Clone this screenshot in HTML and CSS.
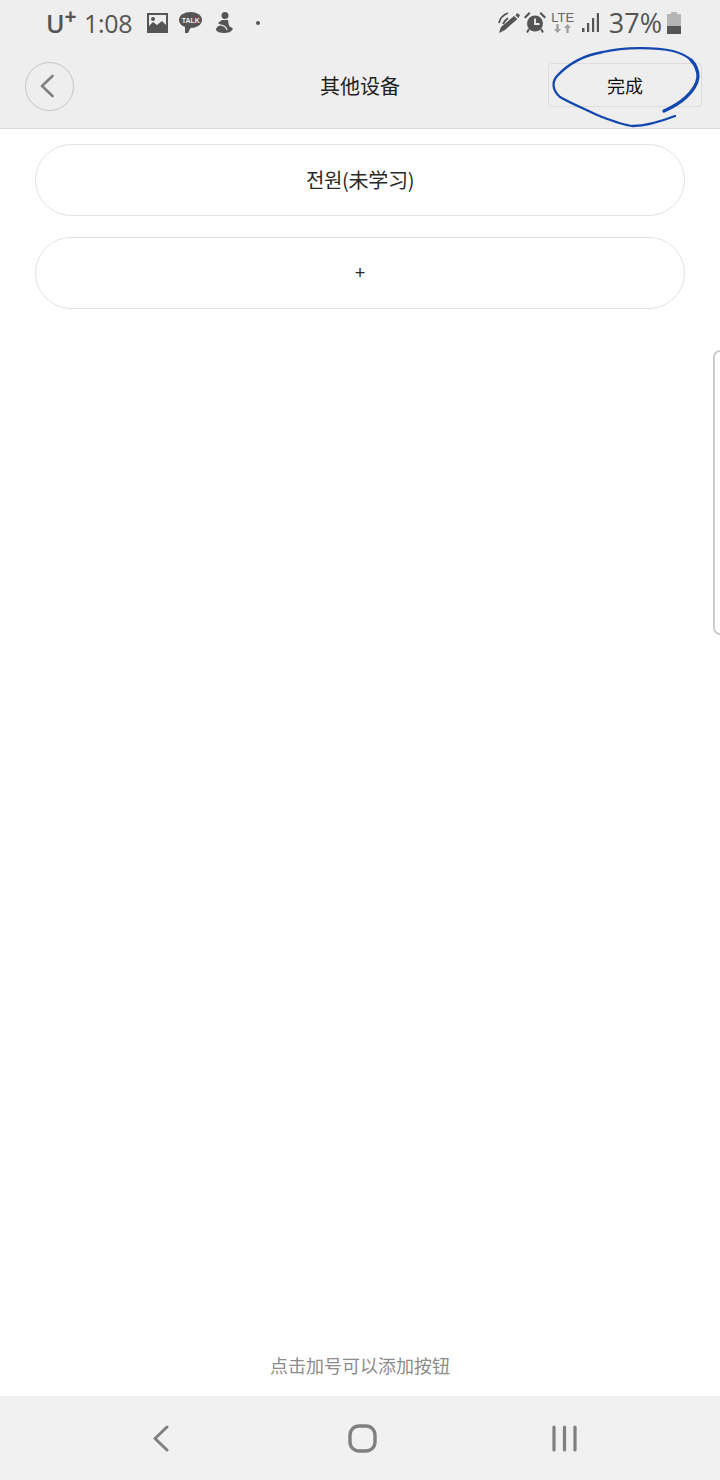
FILE: index.html
```html
<!DOCTYPE html>
<html lang="zh">
<head>
    <meta charset="UTF-8">
    <meta name="viewport" content="width=device-width, initial-scale=1.0">
    <title>其他设备</title>
    <link rel="stylesheet" href="styles.css">
</head>
<body>
    <div class="top">
        <div class="status">
            <div class="status-left">
                <span class="carrier">U<sup>+</sup></span>
                <span class="time">1:08</span>
                <svg class="ic-photo" width="21" height="20" viewBox="0 0 21 20">
                    <path fill="#555" fill-rule="evenodd" d="M0 0h21v20H0zM2 2v11l4-4 4 3 5-4 4 4V2z"/>
                    <circle cx="6" cy="6" r="2" fill="#555"/>
                </svg>
                <span class="talk"><span class="talk-label">TALK</span></span>
                <svg class="ic-person" width="19" height="21" viewBox="0 0 19 21">
                    <circle cx="10" cy="3.500" r="3.500" fill="#555"/>
                    <path fill="#555" d="M7 8h6l1 6c2 1 3 2 4 3-2 3-5 4-9 4-4 0-7-1-8-3 0-3 3-4 5-6-1 0-2 0-3-1 1-1 3-2 4-3z"/>
                    <path fill="none" stroke="#eee" stroke-width="1.200" d="M4 13c3 0 7 1 8 5"/>
                </svg>
                <span class="dot"></span>
            </div>
            <div class="status-right">
                <svg class="ic-pen" width="22" height="21" viewBox="0 0 22 21">
                    <path fill="#555" d="M16 4l3.500 3L7 18l-6 3 2-6z"/>
                    <path fill="none" stroke="#555" stroke-width="1.800" d="M1 11C2 6 5 3 10 1M5 12c1-2 2-4 5-6"/>
                    <path fill="#555" d="M19 1l3 2-1.500 3-3-2.500z"/>
                </svg>
                <svg class="ic-alarm" width="22" height="21" viewBox="0 0 22 21">
                    <circle cx="11" cy="11.500" r="8" fill="#555"/>
                    <path fill="none" stroke="#eee" stroke-width="1.800" d="M11 6.500v5.500h4.500"/>
                    <path fill="#555" d="M0 5l5-5 1.500 1.500-5 5zM22 5l-5-5-1.500 1.500 5 5z"/>
                    <path stroke="#555" stroke-width="2" d="M5 17l-2 3.500M17 17l2 3.500"/>
                </svg>
                <span class="lte">LTE<svg width="17" height="9" viewBox="0 0 17 9"><path fill="#a0a0a0" d="M3.500 9L0 5h2.300V0h2.400v5H7zM13.500 0L17 4h-2.300v5h-2.400V4H10z"/></svg></span>
                <svg class="ic-signal" width="17" height="19" viewBox="0 0 17 19">
                    <rect x="0" y="15" width="2.500" height="4" fill="#555"/>
                    <rect x="5" y="10" width="2.200" height="9" fill="#555"/>
                    <rect x="10" y="5" width="2.200" height="14" fill="#555"/>
                    <rect x="14.800" y="0" width="2.200" height="19" fill="#555"/>
                </svg>
                <span class="battery-text">37%</span>
                <svg class="ic-battery" width="14" height="22" viewBox="0 0 14 22">
                    <path fill="#b5b5b5" d="M4 0h6v2h4v20H0V2h4z"/>
                    <rect y="14" width="14" height="8" fill="#555"/>
                </svg>
            </div>
        </div>
        <header class="nav">
            <button class="back-btn">
                <svg width="14" height="24" viewBox="0 0 14 24"><path fill="none" stroke="#808080" stroke-width="2.600" stroke-linecap="round" stroke-linejoin="round" d="M12.500 2L2 12l10.500 10"/></svg>
            </button>
            <h1 class="title">其他设备</h1>
            <button class="done-btn">完成</button>
        </header>
    </div>

    <main class="content">
        <button class="pill pill-name">전원(未学习)</button>
        <button class="pill pill-add">+</button>
        <p class="hint">点击加号可以添加按钮</p>
    </main>

    <nav class="softkeys">
        <svg class="key-back" width="16" height="27" viewBox="0 0 16 27"><path fill="none" stroke="#808080" stroke-width="3" stroke-linecap="round" stroke-linejoin="round" d="M14 2L2 13.500 14 25"/></svg>
        <svg class="key-home" width="29" height="29" viewBox="0 0 29 29"><rect x="2" y="2" width="25" height="25" rx="9" fill="none" stroke="#808080" stroke-width="3.400"/></svg>
        <svg class="key-recent" width="25" height="27" viewBox="0 0 25 27"><path stroke="#808080" stroke-width="3.200" stroke-linecap="round" d="M2 2v23M12.500 2v23M23 2v23"/></svg>
    </nav>

    <!-- pen mark on top of the screenshot -->
    <svg class="scribble" width="720" height="135" viewBox="0 0 720 135">
        <path fill="none" stroke="#1247ad" stroke-width="2.300" stroke-linecap="round" d="M691 60C686 55 680 53 673 51C655 47 625 47 603 52C585 55 570 62 557 76C552 82 552 90 560 97C572 104 585 109 597 115C610 120 622 125 633 126C648 126 662 121 675 116"/>
        <path fill="none" stroke="#1247ad" stroke-width="3.200" stroke-linecap="round" d="M664 111C680 104 696 92 698 77C698 70 696 65 691 60"/>
    </svg>

    <div class="side-handle"></div>
</body>
</html>
```

FILE: styles.css
```css
html, body {
    margin: 0;
    padding: 0;
}
body {
    position: relative;
    width: 720px;
    height: 1480px;
    overflow: hidden;
    display: flex;
    flex-direction: column;
    background: #fff;
    font-family: "Noto Sans CJK SC", "Noto Sans", sans-serif;
}
button {
    font-family: inherit;
    background: none;
    padding: 0;
    cursor: pointer;
}

/* top area */
.top {
    height: 129px;
    flex: none;
    box-sizing: border-box;
    background: #eeeeee;
    border-bottom: 1px solid #dcdcdc;
}
.status {
    height: 45px;
    display: flex;
    justify-content: space-between;
    align-items: center;
    padding: 0 39px 0 46px;
    color: #555;
}
.status-left, .status-right {
    display: flex;
    align-items: center;
}
.carrier {
    font-family: "Open Sans", sans-serif;
    font-weight: 600;
    font-size: 25px;
    line-height: 30px;
    width: 29px;
    white-space: nowrap;
}
.carrier sup {
    font-size: 21px;
    font-weight: 700;
    line-height: 0;
    vertical-align: 9px;
}
.time {
    font-family: "Open Sans", sans-serif;
    font-size: 25px;
    line-height: 30px;
    margin-left: 9px;
    letter-spacing: -0.3px;
}
.ic-photo { margin-left: 15px; }
.talk {
    position: relative;
    margin: 0 0 5px 11px;
    width: 23px;
    height: 16px;
    border-radius: 50%;
    background: #555;
    display: flex;
    align-items: center;
    justify-content: center;
}
.talk::after {
    content: "";
    position: absolute;
    left: 6px;
    bottom: -5px;
    border-left: 3px solid #555;
    border-right: 3px solid transparent;
    border-top: 6px solid #555;
}
.talk-label {
    font-family: "Liberation Sans", sans-serif;
    font-size: 7px;
    font-weight: 700;
    color: #eee;
}
.ic-person { margin-left: 13px; }
.dot {
    width: 4px;
    height: 4px;
    border-radius: 50%;
    background: #555;
    margin-left: 22px;
}
.ic-alarm { margin-left: 4px; }
.lte {
    font-family: "Liberation Sans", sans-serif;
    font-size: 13px;
    line-height: 12px;
    width: 20px;
    margin-left: 7px;
    display: flex;
    flex-direction: column;
    align-items: center;
    color: #666;
}
.ic-signal { margin-left: 9px; }
.battery-text {
    font-family: "Open Sans", sans-serif;
    font-size: 27px;
    line-height: 30px;
    margin-left: 10px;
}
.ic-battery { margin-left: 5px; }

.nav {
    height: 83px;
    position: relative;
    display: flex;
    align-items: center;
    justify-content: space-between;
    padding: 0 18px 0 25px;
}
.back-btn {
    width: 49px;
    height: 49px;
    border: 1px solid #c4c4c4;
    border-radius: 50%;
    display: flex;
    align-items: center;
    justify-content: center;
    padding-right: 5px;
    margin-bottom: 1px;
}
.title {
    position: absolute;
    left: 0;
    right: 0;
    top: 23px;
    margin: 0;
    text-align: center;
    font-size: 20px;
    font-weight: 400;
    line-height: 36px;
    color: #222;
}
.done-btn {
    width: 154px;
    height: 44px;
    border: 1px solid #dcdcdc;
    border-radius: 4px;
    font-size: 18px;
    color: #111;
    margin-bottom: 3px;
}

/* list of buttons */
.content {
    flex: 1;
    display: flex;
    flex-direction: column;
    gap: 21px;
    padding: 15px 35px 18px;
}
.pill {
    height: 72px;
    flex: none;
    border: 1px solid #e2e2e2;
    border-radius: 36px;
    background: #fff;
    color: #2a2a2a;
}
.pill-name {
    font-size: 20px;
    font-weight: 400;
    letter-spacing: -0.3px;
    padding-bottom: 2px;
}
.pill-add {
    font-family: "Liberation Sans", sans-serif;
    font-size: 18px;
}
.hint {
    margin: auto 0 0;
    text-align: center;
    font-size: 18px;
    line-height: 26px;
    color: #8c8c8c;
}

/* android keys */
.softkeys {
    height: 84px;
    flex: none;
    background: #f1f1f1;
    display: flex;
    align-items: center;
    padding-left: 153px;
}
.key-home { margin-left: 179px; }
.key-recent { margin-left: 175px; }

.scribble {
    position: absolute;
    left: 0;
    top: 0;
}
.side-handle {
    position: absolute;
    right: 0;
    top: 350px;
    width: 7px;
    height: 285px;
    border: 2px solid #cdcdcd;
    border-right: none;
    border-radius: 8px 0 0 8px;
    box-sizing: border-box;
}
```
